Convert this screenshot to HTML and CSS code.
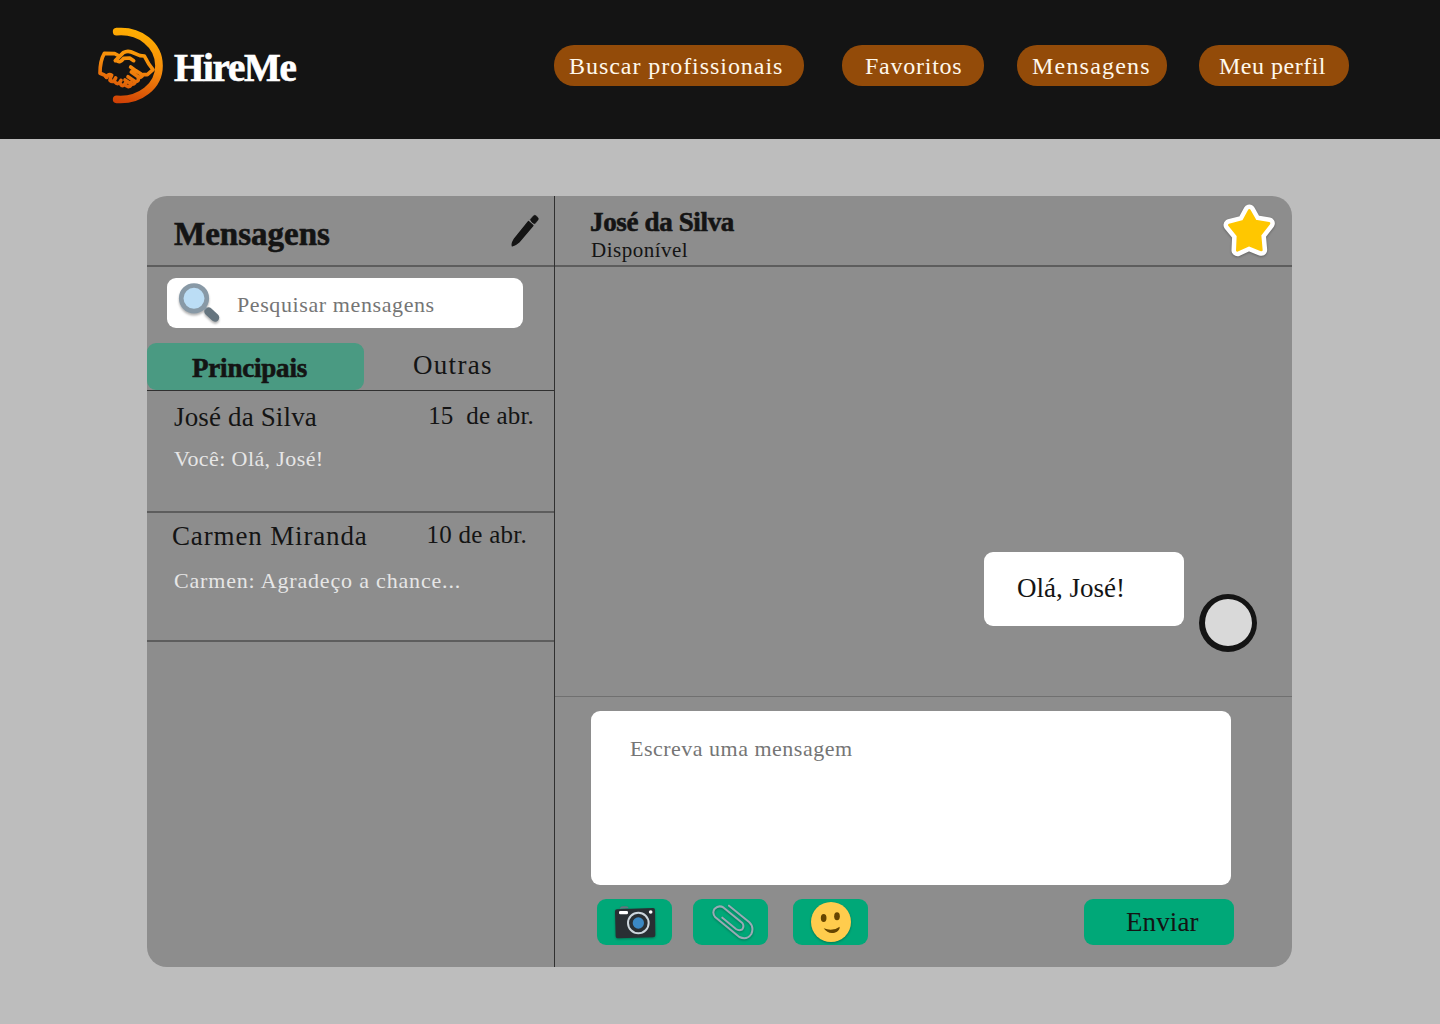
FILE: index.html
```html
<!DOCTYPE html>
<html lang="pt-BR">
<head>
<meta charset="utf-8">
<title>HireMe - Mensagens</title>
<link rel="stylesheet" href="styles.css">
</head>
<body>
<header class="topbar">
  <a class="brand">
    <svg class="brand-mark" viewBox="15 15 213 243" fill="none" stroke="url(#flame)" stroke-linecap="round" stroke-linejoin="round">
      <defs>
        <linearGradient id="flame" gradientUnits="userSpaceOnUse" x1="140" y1="24" x2="90" y2="250">
          <stop offset="0" stop-color="#ffb000"/>
          <stop offset=".5" stop-color="#f58a0c"/>
          <stop offset="1" stop-color="#cf3f05"/>
        </linearGradient>
      </defs>
      <path stroke-width="23" d="M80 35C150 29 207 75 207 137C207 198 150 243 80 238"/>
      <g stroke-width="11">
        <path d="M84 106L74 101L43 100Q30 122 30 160L43 165L50 172"/>
        <path d="M49 171Q56 160 65 166Q60 174 60 181Q70 190 77 174M75 186Q84 198 93 181M91 191Q99 204 108 187M107 196L115 200Q126 198 122 188"/>
        <path d="M76 122L100 98Q112 91 124 96L150 107L163 108Q176 134 189 149L172 164L160 164"/>
        <path d="M80 122Q90 130 101 115L119 114L131 122"/>
        <path d="M122 141L137 152L158 165Q155 174 144 170L124 156M144 171Q149 184 136 185L114 170M136 185Q134 195 122 191L105 180"/>
      </g>
    </svg>
    <span class="brand-name">HireMe</span>
  </a>
  <nav class="nav">
    <a class="pill pill-search">Buscar profissionais</a>
    <a class="pill pill-fav">Favoritos</a>
    <a class="pill pill-msg">Mensagens</a>
    <a class="pill pill-me">Meu perfil</a>
  </nav>
</header>

<main class="panel">
  <aside class="inbox">
    <div class="inbox-head">
      <h1 class="inbox-title">Mensagens</h1>
      <svg class="pencil" viewBox="0 0 30 34" fill="#141414" stroke="#141414" stroke-linejoin="round">
        <path stroke-width="1.200" d="M18.500 7.500L23 11.500L9 28Q5 31.500 2.300 32Q1.500 29.500 4 25.500Z"/>
        <path stroke-width=".6" d="M20.300 5.500L23.600 1.800Q24.800 .8 26 1.800L28 3.700Q28.800 5 27.800 6.200L24.800 9.800Q21.500 9 20.300 5.500Z"/>
      </svg>
    </div>
    <div class="search">
      <svg class="lens" viewBox="0 0 48 48">
        <path d="M33.500 32.500L40 38.500" stroke="#66757f" stroke-width="8.500" stroke-linecap="round"/>
        <path d="M27 26L31 30" stroke="#8899a6" stroke-width="3"/>
        <circle cx="19" cy="19.300" r="12.800" fill="#bbddf5" stroke="#8899a6" stroke-width="4.600"/>
      </svg>
      <span class="search-text">Pesquisar mensagens</span>
    </div>
    <div class="tabs">
      <div class="tab tab-active">Principais</div>
      <div class="tab tab-other">Outras</div>
    </div>
    <div class="thread thread-jose">
      <div class="thread-row"><span class="name">José da Silva</span><span class="date">15  de abr.</span></div>
      <p class="preview">Você: Olá, José!</p>
    </div>
    <div class="thread thread-carmen">
      <div class="thread-row"><span class="name">Carmen Miranda</span><span class="date">10 de abr.</span></div>
      <p class="preview">Carmen: Agradeço a chance...</p>
    </div>
  </aside>

  <section class="chat">
    <div class="chat-head">
      <div class="contact">
        <h2 class="contact-name">José da Silva</h2>
        <p class="contact-status">Disponível</p>
      </div>
      <svg class="star" viewBox="66 38 162 168">
        <path d="M148 60L166 92L207 99L180 134L184 179L147 164L112 180L114 136L88 104L130 93Z" fill="#fff" stroke="#fff" stroke-width="35" stroke-linejoin="round"/>
        <path d="M148 60L166 92L207 99L180 134L184 179L147 164L112 180L114 136L88 104L130 93Z" fill="#ffc700" stroke="#ffc700" stroke-width="8" stroke-linejoin="round"/>
      </svg>
    </div>
    <div class="messages">
      <div class="bubble">Olá, José!</div>
      <div class="avatar"></div>
    </div>
    <div class="composer">
      <div class="field">Escreva uma mensagem</div>
      <div class="actions">
        <div class="tool">
          <svg viewBox="51 87 225 138">
            <path d="M119 116Q121 109 129 109L139 109Q145 109 146 115Z" fill="#66757f"/>
            <path d="M111 118L219 114Q225 114 225 120L226 196Q226 202 219 202L113 205Q107 205 107 199L105 124Q105 118 111 118Z" fill="#292f33"/>
            <rect x="117" y="123" width="27" height="10" rx="4" fill="#fff"/>
            <circle cx="212" cy="126" r="5.500" fill="#fff"/>
            <circle cx="175" cy="159" r="31" fill="#292f33" stroke="#ccd6dd" stroke-width="6"/>
            <circle cx="175" cy="159" r="17" fill="#3b88c3"/>
          </svg>
        </div>
        <div class="tool tool-clip">
          <svg viewBox="339 87 225 138">
            <path d="M447 107L508 157Q523 171 514 192Q500 212 478 201L406 142Q395 129 404 116Q417 104 431 113L486 158Q494 167 487 178Q477 184 468 177L427 143" fill="none" stroke="#99aab5" stroke-width="6" stroke-linecap="round" stroke-linejoin="round"/>
          </svg>
        </div>
        <div class="tool tool-smile">
          <svg viewBox="639 87 225 138">
            <circle cx="753" cy="156" r="60" fill="#ffcc4d"/>
            <ellipse cx="731" cy="144" rx="8.500" ry="12" fill="#664500"/>
            <ellipse cx="771" cy="139" rx="8.500" ry="12" fill="#664500"/>
            <path d="M731 175Q758 186 779 170Q780 182 764 188Q744 193 731 175Z" fill="#664500"/>
          </svg>
        </div>
        <div class="send">Enviar</div>
      </div>
    </div>
  </section>
</main>
</body>
</html>
```
FILE: styles.css
```css
* { box-sizing: border-box; }

body {
  margin: 0;
  min-height: 1024px;
  background: #bdbdbd;
  color: #141414;
  font-family: "Liberation Serif", serif;
}

h1, h2, p { margin: 0; }
svg { display: block; }

/* Top bar */
.topbar {
  display: flex;
  justify-content: space-between;
  height: 139px;
  padding: 25px 91px 0 95px;
  background: #141414;
}

.brand { display: flex; }
.brand-mark { width: 71px; height: 81px; }
.brand-name {
  margin: 18px 0 0 8px;
  color: #fff;
  font-size: 39px;
  font-weight: 700;
  line-height: 50px;
  letter-spacing: -1.3px;
  -webkit-text-stroke: .7px #fff;
}

.nav { display: flex; padding-top: 20px; }
.pill {
  height: 41px;
  padding-left: 15px;
  border-radius: 20px;
  background: #934b09;
  color: #fff8ec;
  font-size: 24px;
  line-height: 42px;
  white-space: nowrap;
}
.pill-search { width: 250px; letter-spacing: .95px; }
.pill-fav { width: 142px; margin-left: 38px; padding-left: 23px; letter-spacing: .75px; }
.pill-msg { width: 150px; margin-left: 33px; letter-spacing: 1.2px; }
.pill-me { width: 150px; margin-left: 32px; padding-left: 20px; letter-spacing: .5px; }

/* Messages panel */
.panel {
  display: flex;
  width: 1145px;
  height: 771px;
  margin: 57px 0 0 147px;
  border-radius: 20px;
  background: #8d8d8d;
  overflow: hidden;
}

.inbox { width: 408px; border-right: 1px solid #303030; }
.inbox-head {
  display: flex;
  justify-content: space-between;
  height: 71px;
  padding: 18px 14px 0 27px;
  border-bottom: 2px solid #5d5d5d;
}
.inbox-title { font-size: 33px; line-height: 40px; -webkit-text-stroke: .6px #141414; }
.pencil { width: 30px; height: 34px; }

.search {
  display: flex;
  width: 356px;
  height: 50px;
  margin: 11px 0 0 20px;
  padding-left: 8px;
  border-radius: 9px;
  background: #fff;
}
.lens { width: 48px; height: 48px; margin-top: 1px; filter: drop-shadow(0 2px 1px rgba(0, 0, 0, .3)); }
.search-text {
  margin-left: 14px;
  color: #757575;
  font-size: 22px;
  line-height: 53px;
  letter-spacing: .6px;
}

.tabs {
  display: flex;
  height: 48px;
  margin-top: 15px;
  border-bottom: 1px solid #303030;
  font-size: 27px;
}
.tab-active {
  width: 217px;
  padding-left: 45px;
  border-radius: 9px;
  background: #4a9a82;
  font-weight: 700;
  line-height: 50px;
  letter-spacing: -.2px;
  -webkit-text-stroke: .6px #141414;
}
.tab-other { padding-left: 49px; line-height: 44px; letter-spacing: 1.3px; }

.thread { height: 122px; border-bottom: 2px solid #5d5d5d; }
.thread-row { display: flex; justify-content: space-between; padding: 11px 20px 0 27px; }
.name { font-size: 27px; line-height: 30px; letter-spacing: .15px; }
.date { font-size: 25px; line-height: 30px; margin-top: -1px; letter-spacing: .15px; white-space: pre; }
.preview {
  margin-top: 12px;
  padding-left: 27px;
  color: #e6e6e6;
  font-size: 22px;
  line-height: 30px;
  letter-spacing: .4px;
}
.thread-carmen { height: 129px; }
.thread-carmen .thread-row { padding: 8px 27px 0 25px; }
.thread-carmen .name { letter-spacing: .85px; }
.thread-carmen .preview { margin-top: 15px; letter-spacing: .83px; }
.thread-carmen .date { letter-spacing: .25px; }

/* Conversation */
.chat { display: flex; flex-direction: column; width: 737px; }
.chat-head {
  display: flex;
  justify-content: space-between;
  height: 71px;
  padding: 7px 16px 0 36px;
  border-bottom: 2px solid #5d5d5d;
}
.contact-name {
  margin-left: -1px;
  font-size: 27px;
  line-height: 38px;
  letter-spacing: -.35px;
  -webkit-text-stroke: .6px #141414;
}
.contact-status { font-size: 21px; line-height: 18px; letter-spacing: .5px; }
.star { width: 54px; height: 56px; filter: drop-shadow(0 1px 1px rgba(0, 0, 0, .3)); }

.messages {
  display: flex;
  flex: 1;
  justify-content: flex-end;
  align-items: flex-end;
  gap: 15px;
  padding: 0 35px 44px 0;
}
.bubble {
  width: 200px;
  height: 74px;
  margin-bottom: 26px;
  padding-left: 33px;
  border-radius: 9px;
  background: #fff;
  font-size: 27px;
  line-height: 72px;
}
.avatar {
  width: 58px;
  height: 58px;
  border: solid #141414;
  border-width: 5px 5px 6px 6px;
  border-radius: 50%;
  background: #d9d9d9;
}

.composer { height: 271px; padding: 14px 58px 0 36px; border-top: 1px solid #707070; }
.field {
  width: 640px;
  height: 174px;
  padding: 23px 39px;
  border-radius: 9px;
  background: #fff;
  color: #757575;
  font-size: 22px;
  line-height: 30px;
  letter-spacing: .5px;
}
.actions { display: flex; margin: 14px 0 0 6px; }
.tool { width: 75px; height: 46px; border-radius: 9px; background: #00a878; }
.tool svg { width: 75px; height: 46px; filter: drop-shadow(0 1px 1px rgba(0, 0, 0, .3)); }
.tool-clip { margin-left: 21px; }
.tool-smile { margin-left: 25px; }
.send {
  width: 150px;
  height: 46px;
  margin-left: 216px;
  padding-left: 42px;
  border-radius: 9px;
  background: #00a878;
  font-size: 27px;
  line-height: 46px;
  letter-spacing: .1px;
}
```
